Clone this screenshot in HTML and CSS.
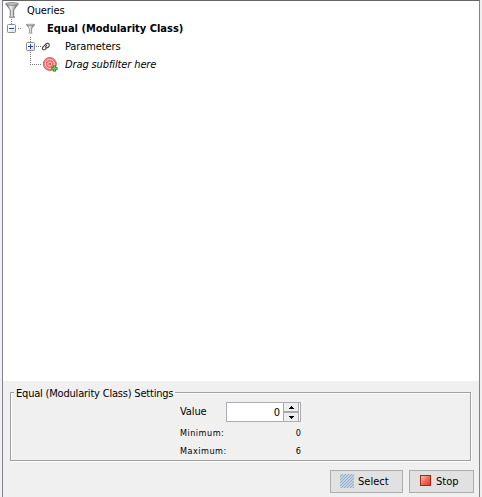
FILE: index.html
```html
<!DOCTYPE html>
<html lang="en">
<head>
<meta charset="utf-8">
<title>Queries</title>
<link rel="stylesheet" href="styles.css">
</head>
<body>
<svg class="defs" width="0" height="0" aria-hidden="true">
  <defs>
    <linearGradient id="metal"><stop offset="0" stop-color="#777"/><stop offset=".4" stop-color="#eee"/><stop offset="1" stop-color="#666"/></linearGradient>
    <linearGradient id="box" x2="1" y2="1"><stop offset=".3" stop-color="#fff"/><stop offset="1" stop-color="#d8d8dc"/></linearGradient>
    <linearGradient id="red" x2="1" y2="1"><stop offset="0" stop-color="#fbd3c6"/><stop offset=".5" stop-color="#e8705c"/><stop offset="1" stop-color="#d83a2a"/></linearGradient>
    <pattern id="hatch" width="3" height="3" patternUnits="userSpaceOnUse"><rect width="3" height="3" fill="#c3d2e2"/><path d="M0 2h1v1H0zM1 1h1v1H1zM2 0h1v1H2z" fill="#94adc9"/></pattern>
    <symbol id="funnel" viewBox="0 0 14 16"><path d="M.7 1.8 5.3 8v5.500q0 1.200-1 1.700h5.400q-1-.5-1-1.700V8l4.600-6.200z" fill="url(#metal)" stroke="#777" stroke-width="1"/><ellipse cx="7" cy="1.900" rx="6.300" ry="1.300" fill="#c9c9c9" stroke="#777" stroke-width=".8"/></symbol>
  </defs>
</svg>
<main class="panel">
  <div class="tree">
    <div class="row">
      <svg class="gutter" width="24" height="18"><use href="#funnel" x="2" y="1" width="14" height="16"/></svg>
      <span class="t-queries">Queries</span>
    </div>
    <div class="row">
      <svg class="gutter" width="44" height="18">
        <path d="M8.500 0v5M15 9.500h3" class="dots"/>
        <rect x="4.500" y="5.500" width="8" height="8" rx="1" fill="url(#box)" stroke="#8b8b8b"/>
        <path d="M6 9.500h5" stroke="#2549a8"/>
        <use href="#funnel" x="23" y="4.500" width="9" height="10.300"/>
      </svg>
      <strong class="t-equal">Equal (Modularity Class)</strong>
    </div>
    <div class="row">
      <svg class="gutter" width="62" height="18">
        <path d="M27.500 0v5M27.500 15v3M33 9.500h5" class="dots"/>
        <rect x="23.500" y="5.500" width="8" height="8" rx="1" fill="url(#box)" stroke="#8b8b8b"/>
        <path d="M25 9.500h5M27.500 7v5" stroke="#2549a8"/>
        <path d="M40.300 12.700C38.700 12 39.300 10.700 40.500 9.500l2-2.200C44 5.700 46.200 6.200 46.300 8c.1 2-1.700 3.200-3.300 2.800M40.300 12.700c1.800.5 2.700-1 2.700-1.900M43 10.800c-.8-1.200 0-2.400 1.200-2.200" fill="none" stroke="#444" stroke-width="1.100"/>
      </svg>
      <span class="t-param">Parameters</span>
    </div>
    <div class="row">
      <svg class="gutter" width="62" height="18">
        <path d="M27.500 1v9M29 9.500h9" class="dots"/>
        <circle cx="46.800" cy="9" r="6.500" fill="#ed7d78" stroke="#dc605d"/>
        <circle cx="46.800" cy="9" r="4.500" fill="#ea6a66" stroke="#fbd3cf"/>
        <circle cx="46.800" cy="9" r="2" fill="#e35d5a" stroke="#fbd3cf"/>
        <path d="M51.500 10.500v6M48.500 13.500h6" stroke="#168022" stroke-width="3"/>
        <path d="M51.500 11v5M49 13.500h5" stroke="#55df60" stroke-width="1.400"/>
      </svg>
      <em class="t-drag">Drag subfilter here</em>
    </div>
  </div>
  <section class="settings">
    <h2 class="caption"><span>Equal (Modularity Class) Settings</span></h2>
    <div class="form">
      <label class="t-value" for="value">Value</label>
      <div class="spinner">
        <output id="value">0</output>
        <div class="arrows">
          <button aria-label="Increase"><svg width="5" height="3"><path d="M2 0h1v1h1v1h1v1H0V2h1V1h1z"/></svg></button>
          <button aria-label="Decrease"><svg width="5" height="3"><path d="M0 0h5v1H4v1H3v1H2V2H1V1H0z"/></svg></button>
        </div>
      </div>
      <span class="small">Minimum:</span><span class="small num">0</span>
      <span class="small">Maximum:</span><span class="small num">6</span>
    </div>
  </section>
  <footer class="actions">
    <button class="btn select"><svg width="14" height="14"><rect width="14" height="14" fill="url(#hatch)"/></svg><span class="t-select">Select</span></button>
    <button class="btn stop"><svg width="11" height="11"><rect x=".5" y=".5" width="10" height="10" fill="url(#red)" stroke="#b71e12"/></svg><span>Stop</span></button>
  </footer>
</main>
</body>
</html>
```
FILE: styles.css
```css
* { box-sizing: border-box; }
body {
  margin: 0;
  height: 497px;
  overflow: hidden;
  background: #f0f0f0;
  color: #000;
  font: 11px/18px "DejaVu Sans Condensed", "DejaVu Sans", sans-serif;
  font-stretch: condensed;
}
button { font: inherit; color: inherit; padding: 0; }
.defs { position: absolute; }
.panel {
  display: flex;
  flex-direction: column;
  width: 478px;
  height: 497px;
  margin-left: 2px;
  border: solid #828290;
  border-width: 1px 1px 0;
  border-top-color: #646464;
}
.tree { height: 380px; background: #fff; }
.row { display: flex; height: 18px; line-height: 20px; white-space: nowrap; }
.gutter { flex: none; }
.dots { stroke: #777; stroke-dasharray: 1 1; fill: none; }
.t-queries, .t-param { letter-spacing: -.1px; }
.t-drag { letter-spacing: -.12px; }
.settings {
  height: 69px;
  margin: 11px 8px 0 7px;
  border: 1px solid #a0a0a0;
  box-shadow: 1px 1px #fff, inset 1px 1px #fff;
}
.caption {
  height: 18px;
  margin: -9px 0 0 3px;
  font: inherit;
  line-height: 20px;
}
.caption span {
  display: inline-block;
  height: 18px;
  padding: 0 2px;
  background: #f0f0f0;
  white-space: nowrap;
  letter-spacing: -.2px;
}
.form {
  display: grid;
  grid-template-columns: 46px 75px;
  grid-template-rows: 20px 18px 18px;
  margin-left: 169px;
}
.t-value { line-height: 20px; letter-spacing: -.1px; }
.form > .small { align-self: end; }
.spinner {
  display: flex;
  height: 20px;
  padding-right: 1px;
  border: 1px solid #abadb3;
  background: #fff;
}
.spinner output { flex: 1; padding-right: 3px; line-height: 20px; text-align: right; }
.arrows {
  display: flex;
  flex-direction: column;
  gap: 2px;
  width: 16px;
  background: #aaa;
  border: solid #aaa;
  border-width: 0 1px;
}
.arrows button {
  display: flex;
  flex: 1;
  align-items: center;
  justify-content: center;
  border: 0;
  background: #efefef;
}
.small { font-size: 9px; line-height: 14px; letter-spacing: .5px; }
.num { text-align: right; letter-spacing: 0; }
.actions {
  display: flex;
  justify-content: flex-end;
  gap: 6px;
  padding: 9px 5px 0 0;
}
.btn {
  display: flex;
  align-items: center;
  height: 23px;
  border: 1px solid #adadad;
  background: #e1e1e1;
}
.btn svg { margin-bottom: 1px; }
.select { width: 73px; padding-left: 9px; gap: 4px; }
.stop { width: 65px; padding-left: 10px; gap: 5px; }
.stop svg { margin-bottom: 2px; }
```
